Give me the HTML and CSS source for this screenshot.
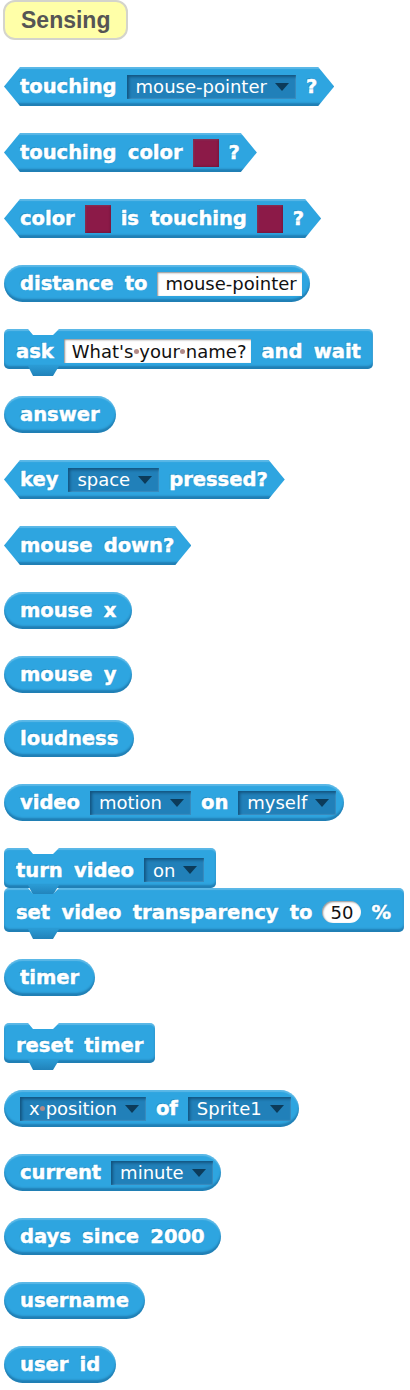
FILE: index.html
```html
<!DOCTYPE html>
<html>
<head>
<meta charset="utf-8">
<link rel="stylesheet" href="styles.css">
</head>
<body>
<div class="palette">
  <div class="cat-btn">Sensing</div>

  <div class="blk pred">
    <span class="lbl">touching</span>
    <span class="dd">mouse-pointer<i class="arr"></i></span>
    <span class="lbl">?</span>
  </div>

  <div class="blk pred">
    <span class="lbl">touching color</span>
    <span class="clr"></span>
    <span class="lbl">?</span>
  </div>

  <div class="blk pred">
    <span class="lbl">color</span>
    <span class="clr"></span>
    <span class="lbl">is touching</span>
    <span class="clr"></span>
    <span class="lbl">?</span>
  </div>

  <div class="blk rep slot-end">
    <span class="lbl">distance to</span>
    <span class="txt">mouse-pointer</span>
  </div>

  <div class="blk cmd">
    <span class="lbl">ask</span>
    <span class="txt">What's<b class="dot"></b>your<b class="dot"></b>name?</span>
    <span class="lbl">and wait</span>
  </div>

  <div class="blk rep"><span class="lbl">answer</span></div>

  <div class="blk pred">
    <span class="lbl">key</span>
    <span class="dd">space<i class="arr"></i></span>
    <span class="lbl">pressed?</span>
  </div>

  <div class="blk pred"><span class="lbl">mouse down?</span></div>

  <div class="blk rep"><span class="lbl">mouse x</span></div>
  <div class="blk rep"><span class="lbl">mouse y</span></div>
  <div class="blk rep"><span class="lbl">loudness</span></div>

  <div class="blk rep slot-end">
    <span class="lbl">video</span>
    <span class="dd">motion<i class="arr"></i></span>
    <span class="lbl">on</span>
    <span class="dd">myself<i class="arr"></i></span>
  </div>

  <div class="stack">
    <div class="blk cmd">
      <span class="lbl">turn video</span>
      <span class="dd">on<i class="arr"></i></span>
    </div>
    <div class="blk cmd tall">
      <span class="lbl">set video transparency to</span>
      <span class="num">50</span>
      <span class="lbl">%</span>
    </div>
  </div>

  <div class="blk rep"><span class="lbl">timer</span></div>
  <div class="blk cmd"><span class="lbl">reset timer</span></div>

  <div class="blk rep slot-end">
    <span class="dd">x<b class="dot"></b>position<i class="arr"></i></span>
    <span class="lbl">of</span>
    <span class="dd">Sprite1<i class="arr"></i></span>
  </div>

  <div class="blk rep slot-end">
    <span class="lbl">current</span>
    <span class="dd">minute<i class="arr"></i></span>
  </div>

  <div class="blk rep"><span class="lbl">days since 2000</span></div>
  <div class="blk rep"><span class="lbl">username</span></div>
  <div class="blk rep"><span class="lbl">user id</span></div>
</div>
</body>
</html>
```

FILE: styles.css
```css
html, body {
  margin: 0;
  padding: 0;
  background: #ffffff;
}

.palette {
  display: flex;
  flex-direction: column;
  align-items: flex-start;
  gap: 27px;
  padding-left: 4px;
}

.cat-btn {
  box-sizing: border-box;
  margin-left: -1px;
  width: 125px;
  height: 40px;
  border: 2px solid #d4d4cc;
  border-radius: 12px;
  background: #ffffa8;
  color: #555555;
  font: 700 23px "Liberation Sans", Arial, sans-serif;
  line-height: 36px;
  padding-left: 16px;
}

.blk {
  box-sizing: border-box;
  display: flex;
  align-items: center;
  gap: 10px;
  background: #2ea5e0;
  color: #ffffff;
  font: 700 19.5px "DejaVu Sans", Verdana, sans-serif;
  word-spacing: 4.5px;
  white-space: nowrap;
  box-shadow: inset 0 2px 1px rgba(255, 255, 255, 0.22), inset 0 -3px 2px rgba(0, 40, 80, 0.3);
}

.lbl {
  -webkit-text-stroke: 0.45px #ffffff;
  text-shadow: -1px -1px 0 rgba(0, 50, 90, 0.2);
}

.pred {
  height: 39px;
  padding: 0 17px 0 16px;
  clip-path: polygon(16px 0, calc(100% - 16px) 0, 100% 50%, calc(100% - 16px) 100%, 16px 100%, 0 50%);
}

.rep {
  height: 37px;
  padding: 0 16px;
  border-radius: 19px;
}

.rep.slot-end {
  padding-right: 8px;
}

.stack {
  display: flex;
  flex-direction: column;
  align-items: flex-start;
}

.cmd {
  position: relative;
  height: 40px;
  padding: 4px 12px 0 12px;
  border-radius: 5px;
  clip-path: polygon(0 0, 24px 0, 29px 6px, 49px 6px, 55px 0, 100% 0, 100% 100%, 55px 100%, 49px calc(100% + 8px), 29px calc(100% + 8px), 24px 100%, 0 100%);
}

.cmd.tall {
  height: 44px;
  padding-right: 13px;
}

.cmd::after {
  content: "";
  position: absolute;
  left: 24px;
  top: calc(100% - 3px);
  width: 31px;
  height: 10px;
  background: linear-gradient(#2a9ad4, #2182b9);
  clip-path: polygon(0 0, 100% 0, calc(100% - 6px) 100%, 5px 100%);
}

/* dropdown slot */
.dd {
  display: flex;
  align-items: center;
  height: 24px;
  padding: 0 7px 0 9px;
  background: #2180b9;
  box-shadow: inset 2px 2px 3px rgba(0, 30, 60, 0.45), inset -1px -1px 1px rgba(255, 255, 255, 0.12);
  font: 400 18px "DejaVu Sans", Verdana, sans-serif;
  word-spacing: 0;
  color: #ffffff;
}

.arr {
  display: inline-block;
  margin-left: 8px;
  width: 0;
  height: 0;
  border-left: 7px solid transparent;
  border-right: 7px solid transparent;
  border-top: 8px solid #0c3b5a;
}

/* text slot */
.txt {
  display: flex;
  align-items: center;
  height: 24px;
  padding: 0 5px 0 8px;
  background: #ffffff;
  box-shadow: inset 1px 1px 2px rgba(0, 0, 0, 0.45);
  font: 400 18px "DejaVu Sans", Verdana, sans-serif;
  word-spacing: 0;
  color: #111111;
}

.num {
  display: flex;
  align-items: center;
  justify-content: center;
  height: 22px;
  width: 39px;
  border-radius: 11px;
  background: #ffffff;
  box-shadow: inset 1px 1px 2px rgba(0, 0, 0, 0.45);
  font: 400 18px "DejaVu Sans", Verdana, sans-serif;
  color: #111111;
}

.dot {
  display: inline-block;
  width: 5px;
  height: 5px;
  margin: 0 0.5px;
  border-radius: 50%;
  background: #b08a88;
}

.clr {
  display: block;
  width: 26px;
  height: 28px;
  background: #8c1a48;
  box-shadow: inset 0 0 3px rgba(0, 0, 0, 0.35), inset 1px 1px 2px rgba(255, 255, 255, 0.15);
}
```
